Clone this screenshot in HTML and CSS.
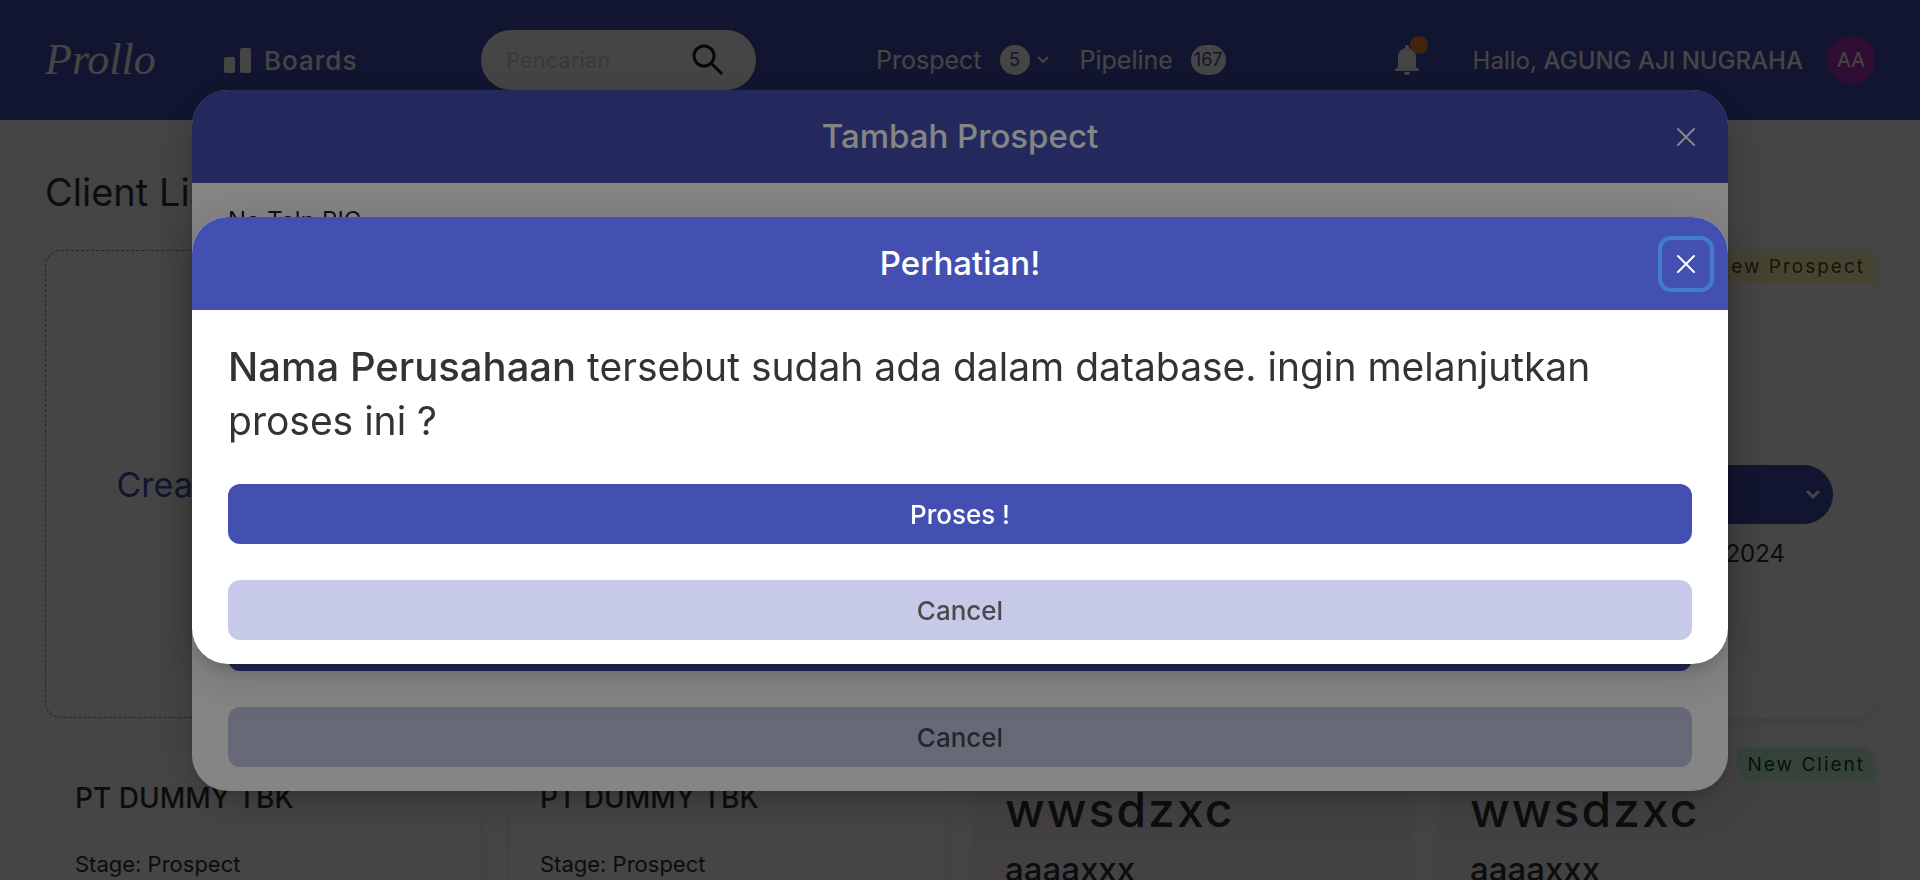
FILE: index.html
```html
<!DOCTYPE html>
<html lang="id">
<head>
<meta charset="utf-8">
<title>Prollo</title>
<link rel="stylesheet" href="styles.css">
</head>
<body>
<header class="topbar">
  <a class="logo" href="#">Prollo</a>
  <a class="boards" href="#">
    <svg width="28" height="28" viewBox="0 0 28 28" fill="currentColor" aria-hidden="true"><rect x="0" y="11" width="11" height="16" rx="2"/><rect x="16" y="2" width="11" height="25" rx="2"/></svg>
    Boards
  </a>
  <form class="search">
    <input class="search-input" type="search" placeholder="Pencarian" aria-label="Pencarian">
    <button class="icon-button" type="button" aria-label="Cari">
      <svg width="32" height="32" viewBox="0 0 32 32" fill="none" stroke="currentColor" stroke-width="3" aria-hidden="true"><circle cx="12" cy="12" r="10"/><path d="M19 19L30 30"/></svg>
    </button>
  </form>
  <nav class="nav">
    <a class="nav-link" href="#">Prospect <span class="count">5</span><svg class="nav-chevron" width="14" height="10" viewBox="0 0 14 10" fill="none" stroke="currentColor" stroke-width="2" aria-hidden="true"><path d="M2 2l5 5 5-5"/></svg></a>
    <a class="nav-link" href="#">Pipeline <span class="count">167</span></a>
  </nav>
  <div class="account">
    <button class="bell" type="button" aria-label="Notifikasi">
      <svg width="24" height="30" viewBox="0 0 24 30" fill="currentColor" aria-hidden="true"><path d="M12 0c1.200 0 2 .9 2 2v1.200c4 .9 7 4 7 8.800v10l3 2.500V26H0v-1.500L3 22V12c0-4.800 3-7.900 7-8.800V2c0-1.100.8-2 2-2z"/><path d="M9 27h6a3 3 0 0 1-6 0z"/></svg>
      <span class="bell-dot"></span>
    </button>
    <span class="greeting">Hallo, <b>AGUNG AJI NUGRAHA</b></span>
    <span class="avatar">AA</span>
  </div>
</header>
<main class="page">
  <h1 class="page-title">Client List</h1>
  <div class="board">
    <button class="card card-create" type="button">Create Prospect +</button>
    <article class="card"></article>
    <article class="card"></article>
    <article class="card card-stage">
      <span class="tag tag-prospect">New Prospect</span>
      <button class="stage-select" type="button" aria-label="Stage"><svg width="16" height="11" viewBox="0 0 16 11" fill="none" stroke="currentColor" stroke-width="3" aria-hidden="true"><path d="M2 2l6 6 6-6"/></svg></button>
      <p class="stage-date">20 September 2024</p>
    </article>
    <article class="card"><h2 class="card-title">PT DUMMY TBK</h2><p class="card-stage-text">Stage: Prospect</p></article>
    <article class="card"><h2 class="card-title">PT DUMMY TBK</h2><p class="card-stage-text">Stage: Prospect</p></article>
    <article class="card card-client"><h2 class="client-title">wwsdzxc</h2><p class="client-sub">aaaaxxx</p></article>
    <article class="card card-client"><span class="tag tag-client">New Client</span><h2 class="client-title">wwsdzxc</h2><p class="client-sub">aaaaxxx</p></article>
  </div>
</main>

<div class="overlay">
  <section class="modal" role="dialog" aria-label="Tambah Prospect">
    <header class="modal-header">
      <h2 class="modal-title">Tambah Prospect</h2>
      <button class="close" type="button" aria-label="Tutup"><svg width="20" height="20" viewBox="0 0 20 20" fill="none" stroke="currentColor" stroke-width="2" stroke-linecap="round" aria-hidden="true"><path d="M2 2l16 16M18 2L2 18"/></svg></button>
    </header>
    <form class="modal-body form-body">
      <label class="form-label" for="phone">No Telp PIC</label>
      <input class="form-input" id="phone" type="tel">
      <div class="actions">
        <button class="button button-primary" type="button" aria-label="Simpan"></button>
        <button class="button button-muted" type="button">Cancel</button>
      </div>
    </form>
  </section>
</div>

<div class="overlay">
  <section class="modal" role="alertdialog" aria-label="Perhatian!">
    <header class="modal-header">
      <h2 class="modal-title">Perhatian!</h2>
      <button class="close close-focused" type="button" aria-label="Tutup"><svg width="20" height="20" viewBox="0 0 20 20" fill="none" stroke="currentColor" stroke-width="2" stroke-linecap="round" aria-hidden="true"><path d="M2 2l16 16M18 2L2 18"/></svg></button>
    </header>
    <div class="modal-body">
      <p class="message"><b class="message-subject">Nama Perusahaan</b> tersebut sudah ada dalam database. ingin melanjutkan proses ini ?</p>
      <div class="actions">
        <button class="button button-primary" type="button">Proses !</button>
        <button class="button button-muted" type="button">Cancel</button>
      </div>
    </div>
  </section>
</div>
</body>
</html>
```
FILE: styles.css
```css
* { box-sizing: border-box; }
body {
  margin: 0;
  height: 100vh;
  overflow: hidden;
  background: #fdfdfd;
  color: #333;
  font-family: Inter, "Open Sans", sans-serif;
  font-size: 24px;
}
h1, h2, p { margin: 0; font-weight: 400; }
b { font-weight: 500; }
a { color: inherit; text-decoration: none; }
button, input { font: inherit; color: inherit; border: 0; margin: 0; padding: 0; background: none; }
svg { display: block; flex: none; }

.topbar {
  display: flex;
  align-items: center;
  height: 120px;
  padding: 0 45px;
  background: #4350b1;
  color: #fff;
}
.logo { width: 179px; font: italic 44px/60px "Liberation Serif", serif; }
.boards { display: flex; align-items: center; gap: 12px; width: 257px; font-size: 26px; font-weight: 500; letter-spacing: 1px; }
.search {
  display: flex;
  align-items: center;
  justify-content: space-between;
  width: 275px;
  height: 60px;
  padding: 0 32px 0 25px;
  border-radius: 30px;
  background: #fff;
  color: #1a202c;
}
.search-input { width: 150px; font-size: 22px; outline: 0; }
.search-input::placeholder { color: #cbd5e0; }
.nav { display: flex; gap: 30px; margin-left: 120px; font-size: 25px; }
.nav-link { display: flex; align-items: center; }
.count {
  min-width: 30px;
  height: 30px;
  margin-left: 18px;
  padding: 0 3px;
  border-radius: 15px;
  background: #fff;
  color: #4350b1;
  font-size: 18px;
  line-height: 30px;
  text-align: center;
}
.nav-chevron { margin-left: 6px; }
.account { display: flex; align-items: center; margin-left: auto; }
.bell { position: relative; margin-right: 54px; }
.bell-dot {
  position: absolute;
  top: -9px;
  right: -9px;
  width: 18px;
  height: 18px;
  border-radius: 50%;
  background: #f6892b;
}
.avatar {
  width: 48px;
  height: 48px;
  margin-left: 24px;
  border-radius: 50%;
  background: #b133bd;
  font-size: 20px;
  line-height: 48px;
  text-align: center;
}

.page { padding: 45px; }
.page-title { font-size: 38px; line-height: 54px; }
.board {
  display: grid;
  grid-template-columns: repeat(4, 1fr);
  grid-template-rows: 468px 468px;
  gap: 30px;
  margin-top: 31px;
}
.card {
  position: relative;
  padding: 30px;
  border-radius: 16px;
  background: #fff;
  box-shadow: 0 4px 12px rgba(0, 0, 0, .08);
}
.card-create {
  border: 1px dashed #8a8ab0;
  background: none;
  box-shadow: none;
  color: #4350b1;
  font-size: 34px;
}
.card-title { font-size: 28px; font-weight: 500; line-height: 40px; }
.card-stage-text { margin-top: 24px; font-size: 22px; line-height: 44px; }
.card-client { background: #faf0fa; }
.client-title { font-size: 48px; font-weight: 500; line-height: 64px; letter-spacing: 2px; }
.client-sub { font-size: 33px; font-weight: 500; line-height: 54px; }
.tag {
  position: absolute;
  top: 0;
  right: 0;
  height: 33px;
  padding: 0 10px;
  border-radius: 0 16px 0 16px;
  font-size: 19px;
  line-height: 33px;
  letter-spacing: 2px;
}
.tag-prospect { background: #fefcbf; color: #744210; }
.tag-client { background: #c6f6d5; color: #1c4532; }
.card-stage { display: flex; flex-direction: column; justify-content: center; gap: 15px; padding: 66px 42px 0; }
.stage-select {
  display: flex;
  align-items: center;
  justify-content: flex-end;
  height: 59px;
  padding: 0 12px;
  border-radius: 30px;
  background: #4350b1;
  color: #fff;
}
.stage-date { padding-right: 48px; line-height: 30px; text-align: right; }

.overlay {
  position: fixed;
  inset: 0;
  display: flex;
  align-items: center;
  justify-content: center;
  padding-top: 1px;
  background: rgba(0, 0, 0, .48);
}
.modal {
  width: 80%;
  overflow: hidden;
  border-radius: 36px;
  background: #fff;
  box-shadow: 0 10px 15px -3px rgba(0, 0, 0, .1), 0 4px 6px -2px rgba(0, 0, 0, .05), 0 10px 50px rgba(0, 0, 0, .2);
}
.modal-header {
  display: flex;
  align-items: center;
  height: 93px;
  padding: 0 18px;
  background: #4350b1;
  color: #fff;
}
.modal-title { flex: 1; padding-left: 48px; font-size: 33px; font-weight: 500; line-height: 45px; text-align: center; }
.close { display: grid; place-items: center; width: 48px; height: 48px; border-radius: 9px; }
.close-focused { box-shadow: 0 0 0 4px #427ccc; }
.modal-body { padding: 30px 36px 24px; }
.message { font-size: 39px; line-height: 54px; }
.message-subject { font-size: 40px; }
.actions { display: flex; flex-direction: column; gap: 36px; margin-top: 36px; }
.button { height: 60px; border-radius: 12px; font-size: 26px; font-weight: 500; }
.button-primary { background: #4350b1; color: #fff; }
.button-muted { background: #c6c9e8; color: #4a4a4a; }
.form-body { display: flex; flex-direction: column; padding-top: 20px; color: #1a202c; }
.form-label { line-height: 36px; }
.form-input { height: 336px; }
```
